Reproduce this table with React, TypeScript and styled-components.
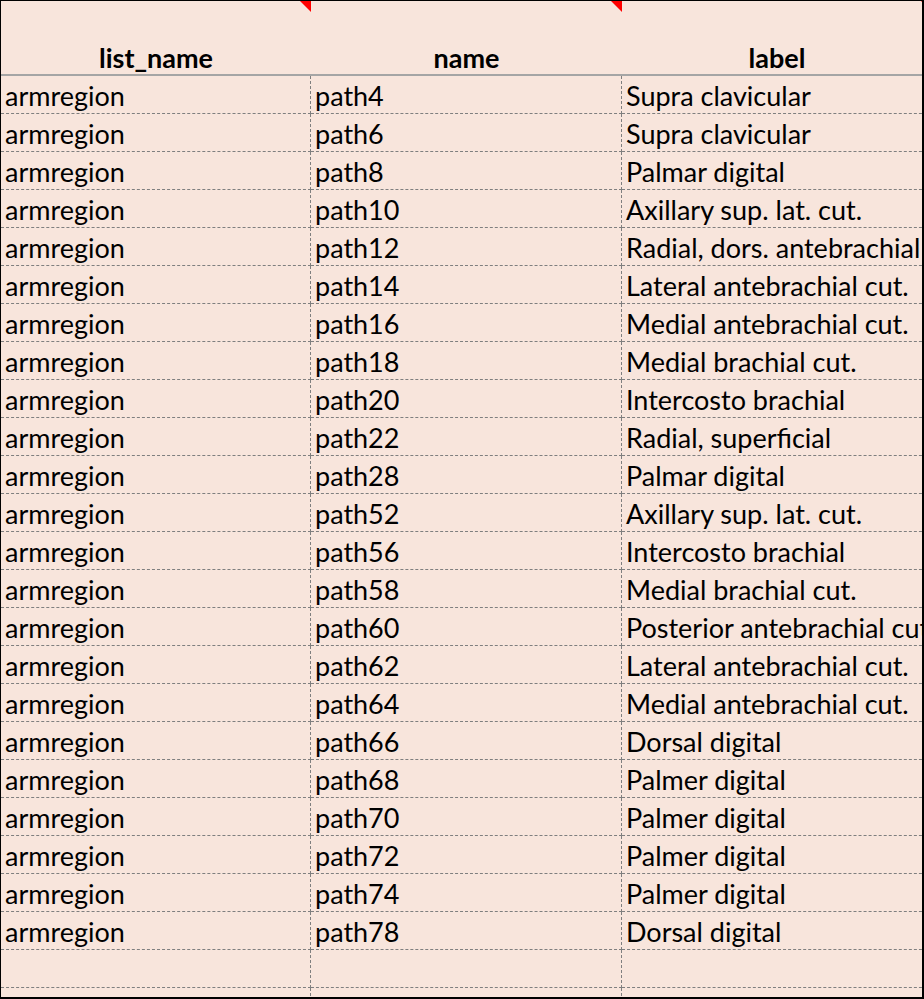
import React from 'react'
import styled, { createGlobalStyle } from 'styled-components'

const rows: [string, string][] = [
  ['path4', 'Supra clavicular'],
  ['path6', 'Supra clavicular'],
  ['path8', 'Palmar digital'],
  ['path10', 'Axillary sup. lat. cut.'],
  ['path12', 'Radial, dors. antebrachial cut.'],
  ['path14', 'Lateral antebrachial cut.'],
  ['path16', 'Medial antebrachial cut.'],
  ['path18', 'Medial brachial cut.'],
  ['path20', 'Intercosto brachial'],
  ['path22', 'Radial, superficial'],
  ['path28', 'Palmar digital'],
  ['path52', 'Axillary sup. lat. cut.'],
  ['path56', 'Intercosto brachial'],
  ['path58', 'Medial brachial cut.'],
  ['path60', 'Posterior antebrachial cut.'],
  ['path62', 'Lateral antebrachial cut.'],
  ['path64', 'Medial antebrachial cut.'],
  ['path66', 'Dorsal digital'],
  ['path68', 'Palmer digital'],
  ['path70', 'Palmer digital'],
  ['path72', 'Palmer digital'],
  ['path74', 'Palmer digital'],
  ['path78', 'Dorsal digital'],
]

const headers = ['list_name', 'name', 'label']

export default function App() {
  return (
    <>
      <GlobalStyle />
      <Sheet>
        {headers.map(h => (
          <HeadCell key={h}>{h}</HeadCell>
        ))}
        {rows.map(([name, label]) => (
          <React.Fragment key={name}>
            <Cell>armregion</Cell>
            <Cell>{name}</Cell>
            <Cell>{label}</Cell>
          </React.Fragment>
        ))}
        {[0, 1, 2, 3, 4, 5].map(i => (
          <Cell key={'empty' + i} />
        ))}
      </Sheet>
    </>
  )
}

const GlobalStyle = createGlobalStyle`
  body {
    margin: 0;
    background: #ffffff;
  }
`

const Sheet = styled.div`
  box-sizing: border-box;
  width: 924px;
  height: 999px;
  overflow: hidden;
  border: 1px solid #000000;
  border-right-width: 2px;
  border-bottom-width: 2px;
  background: #f8e5dc;
  display: grid;
  grid-template-columns: 310px 311px 310px;
  grid-auto-rows: 38px;
  grid-template-rows: 75px;
  font-family: Lato, 'Liberation Sans', sans-serif;
  color: #000000;
`

const HeadCell = styled.div`
  position: relative;
  box-sizing: border-box;
  display: flex;
  align-items: flex-end;
  justify-content: center;
  border-bottom: 2px solid #a5a5a5;
  font-size: 27px;
  font-weight: 700;

  &::after {
    content: '';
    position: absolute;
    top: 0;
    right: 0;
    border-top: 11px solid #ff0000;
    border-left: 11px solid transparent;
  }
`

const Cell = styled.div`
  box-sizing: border-box;
  padding: 2px 0 0 4px;
  border-bottom: 1px dashed #7f7f7f;
  font-size: 27px;
  line-height: 35px;
  white-space: nowrap;

  &:not(:nth-child(3n)) {
    border-right: 1px dashed #7f7f7f;
  }
`
